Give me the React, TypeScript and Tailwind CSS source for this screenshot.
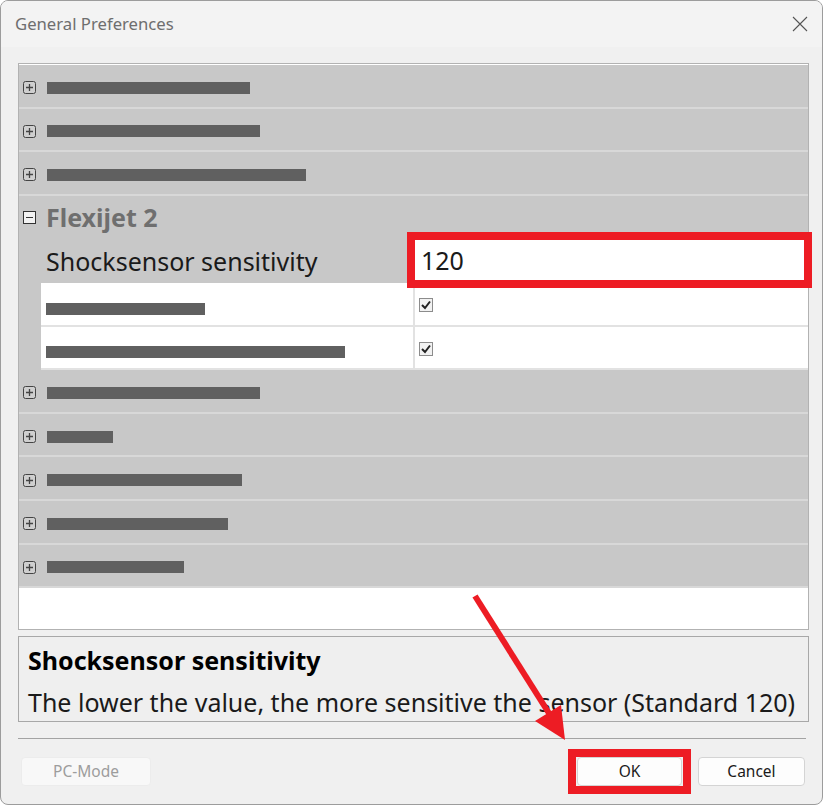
import React from 'react';

const font = { fontFamily: '"Noto Sans", "Open Sans", sans-serif' };

const PlusBox: React.FC = () => (
  <svg width="13" height="13" viewBox="0 0 13 13" className="shrink-0">
    <rect x="0.5" y="0.5" width="12" height="12" rx="2" fill="#cfcfcf" stroke="#444" />
    <path d="M3 6.5 H10 M6.5 3 V10" stroke="#444" strokeWidth="1.3" />
  </svg>
);

const MinusBox: React.FC = () => (
  <svg width="13" height="13" viewBox="0 0 13 13" className="shrink-0">
    <rect x="0.5" y="0.5" width="12" height="12" fill="#f2f2f2" stroke="#333" />
    <path d="M3 6.5 H10" stroke="#333" strokeWidth="1.2" />
  </svg>
);

const Check: React.FC = () => (
  <svg width="14" height="14" viewBox="0 0 14 14" className="shrink-0">
    <rect x="0.5" y="0.5" width="13" height="13" fill="#f2f2f2" stroke="#8c8c8c" />
    <path d="M3 7 L6 10 L11 3.5" fill="none" stroke="#222" strokeWidth="2" />
  </svg>
);

// collapsed categories, names blurred out in the screenshot
const CategoryRow: React.FC<{ bar: number }> = ({ bar }) => (
  <div className="flex items-center h-[43.6px] bg-[#c8c8c8] border-b-2 border-[#d8d8d8] pl-[4px] pt-[4px]">
    <PlusBox />
    <div className="ml-[11px] h-[12px] bg-[#606060]" style={{ width: bar }} />
  </div>
);

const BoolRow: React.FC<{ bar: number }> = ({ bar }) => (
  <div className="flex h-[43.6px] bg-[#c8c8c8]">
    <div className="w-[22px] shrink-0" />
    <div className="flex flex-1 bg-white border-b-2 border-[#e2e2e2]">
      <div className="w-[374px] flex items-center border-r-2 border-[#e2e2e2] pl-[5px] pt-[10px]">
        <div className="h-[12px] bg-[#606060]" style={{ width: bar }} />
      </div>
      <div className="flex-1 pl-[4px] pt-[15px]">
        <Check />
      </div>
    </div>
  </div>
);

export default function App() {
  return (
    <div
      className="relative w-[823px] h-[805px] bg-[#f0f0f0] border border-[#9c9c9c] rounded-[8px] overflow-hidden"
      style={font}
    >
      {/* title bar */}
      <div className="h-[46px] bg-[#f3f3f3] flex items-center justify-between pl-[14px] pr-[14px]">
        <span className="text-[16.7px] text-[#6e6e6e]">General Preferences</span>
        <svg width="16" height="16" viewBox="0 0 16 16">
          <path d="M1 1 L15 15 M15 1 L1 15" stroke="#555" strokeWidth="1.1" />
        </svg>
      </div>

      <div className="pl-[17px] pr-[13px] pt-[16px]">
        {/* property grid */}
        <div className="h-[567px] bg-white border border-[#b2b2b2] flex flex-col pt-[1px]">
          <CategoryRow bar={203} />
          <CategoryRow bar={213} />
          <CategoryRow bar={259} />

          <div className="flex items-center h-[43.6px] bg-[#c8c8c8] pl-[4px]">
            <MinusBox />
            <span className="ml-[10px] text-[25px] font-bold text-[#6f6f6f]">Flexijet 2</span>
          </div>
          <div className="flex h-[43.6px] bg-[#c8c8c8]">
            <div className="w-[396px] shrink-0 flex items-center pl-[27px] pt-[2px]">
              <span className="text-[25px] text-[#1a1a1a]">Shocksensor sensitivity</span>
            </div>
            <div className="relative flex-1 bg-white flex items-center pl-[6px] mr-[2px]">
              <span className="text-[25px] text-[#1a1a1a]">120</span>
              <div className="absolute left-[-8px] top-[-7px] right-[-6px] bottom-[-5px] border-[8px] border-[#ed1c24]" />
            </div>
          </div>
          <BoolRow bar={159} />
          <BoolRow bar={299} />

          <CategoryRow bar={213} />
          <CategoryRow bar={66} />
          <CategoryRow bar={195} />
          <CategoryRow bar={181} />
          <CategoryRow bar={137} />
          <div className="flex-1 bg-white" />
        </div>

        {/* description */}
        <div className="mt-[6px] h-[86px] border border-[#a8a8a8] bg-[#efefef] pl-[9px] pt-[8px]">
          <div className="text-[25px] font-bold text-black leading-[30px]">Shocksensor sensitivity</div>
          <div className="mt-[12px] text-[25px] text-[#1a1a1a] leading-[30px]">
            The lower the value, the more sensitive the sensor (Standard 120)
          </div>
        </div>

        <div className="mt-[16px] h-px bg-[#a3a3a3] mr-[3px]" />

        {/* buttons */}
        <div className="mt-[18px] flex items-center justify-between pl-[3px] pr-[4px]">
          <div className="w-[130px] h-[29px] rounded-[4px] border border-[#ececec] bg-[#f8f8f8] flex items-center justify-center text-[15.5px] text-[#9d9d9d]">
            PC-Mode
          </div>
          <div className="flex items-center gap-[16px]">
            <div className="relative w-[105px] h-[29px] rounded-[4px] border border-[#d4d4d4] bg-[#fdfdfd] flex items-center justify-center text-[15.5px] text-[#1a1a1a]">
              OK
              <div className="absolute left-[-10px] top-[-9px] right-[-10px] bottom-[-9px] border-[8px] border-[#ed1c24]" />
            </div>
            <div className="w-[107px] h-[29px] rounded-[4px] border border-[#d4d4d4] bg-[#fdfdfd] flex items-center justify-center text-[15.5px] text-[#1a1a1a]">
              Cancel
            </div>
          </div>
        </div>
      </div>

      {/* annotation arrow */}
      <svg className="absolute left-0 top-0 pointer-events-none" width="823" height="805">
        <line x1="474" y1="595" x2="551" y2="717" stroke="#ed1c24" strokeWidth="6" />
        <polygon points="564,739 534,720 560,704" fill="#ed1c24" />
      </svg>
    </div>
  );
}
